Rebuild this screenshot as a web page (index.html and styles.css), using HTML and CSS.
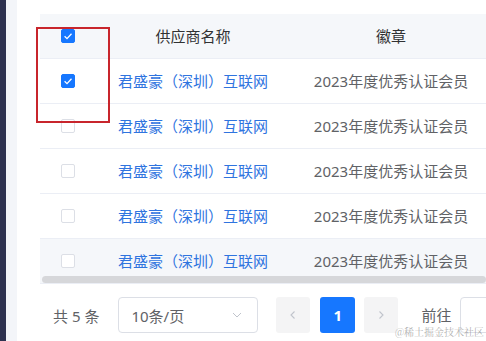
FILE: index.html
```html
<!DOCTYPE html>
<html lang="zh-CN">
<head>
    <meta charset="UTF-8">
    <meta name="viewport" content="width=device-width, initial-scale=1.0">
    <title>供应商列表</title>
    <link rel="stylesheet" href="styles.css">
</head>
<body>
    <div class="layout">
        <div class="sidebar"></div>
        <div class="gutter"></div>
        <div class="main">
            <div class="table-wrap">
                <table class="table">
                    <colgroup>
                        <col class="col-check">
                        <col class="col-name">
                        <col class="col-badge">
                    </colgroup>
                    <thead>
                        <tr>
                            <th><span class="checkbox checked"><svg viewBox="0 0 14 14"><path d="M3.6 7.3 L6 9.6 L10.5 4.8" /></svg></span></th>
                            <th>供应商名称</th>
                            <th>徽章</th>
                        </tr>
                    </thead>
                    <tbody>
                        <tr>
                            <td><span class="checkbox checked"><svg viewBox="0 0 14 14"><path d="M3.6 7.3 L6 9.6 L10.5 4.8" /></svg></span></td>
                            <td class="link">君盛豪（深圳）互联网</td>
                            <td>2023年度优秀认证会员</td>
                        </tr>
                        <tr>
                            <td><span class="checkbox"></span></td>
                            <td class="link">君盛豪（深圳）互联网</td>
                            <td>2023年度优秀认证会员</td>
                        </tr>
                        <tr>
                            <td><span class="checkbox"></span></td>
                            <td class="link">君盛豪（深圳）互联网</td>
                            <td>2023年度优秀认证会员</td>
                        </tr>
                        <tr>
                            <td><span class="checkbox"></span></td>
                            <td class="link">君盛豪（深圳）互联网</td>
                            <td>2023年度优秀认证会员</td>
                        </tr>
                        <tr class="hover">
                            <td><span class="checkbox"></span></td>
                            <td class="link">君盛豪（深圳）互联网</td>
                            <td>2023年度优秀认证会员</td>
                        </tr>
                    </tbody>
                </table>
                <div class="scrollbar"></div>
                <!-- 标注框 -->
                <div class="mark"></div>
            </div>

            <div class="pagination">
                <span class="total">共 5 条</span>
                <div class="select">
                    <span>10条/页</span>
                    <svg class="arrow" viewBox="0 0 12 12"><path d="M2 4 L6 8 L10 4" /></svg>
                </div>
                <button class="btn-nav" disabled><svg viewBox="0 0 12 12"><path d="M7.5 2.5 L4 6 L7.5 9.5" /></svg></button>
                <button class="pager active">1</button>
                <button class="btn-nav" disabled><svg viewBox="0 0 12 12"><path d="M4.5 2.5 L8 6 L4.5 9.5" /></svg></button>
                <span class="jump">前往</span>
                <div class="jump-input"></div>
            </div>
        </div>
    </div>
    <div class="watermark">@稀土掘金技术社区</div>
</body>
</html>
```

FILE: styles.css
```css
body {
    margin: 0;
    font-family: "Noto Sans", "Noto Sans CJK SC", sans-serif;
    background-color: #ffffff;
    height: 341px;
    overflow: hidden;
}
.layout {
    display: flex;
    height: 100%;
}
.sidebar {
    width: 6px;
    flex-shrink: 0;
    background-color: #2e3250;
}
.gutter {
    width: 11px;
    flex-shrink: 0;
    background-color: #f3f5f9;
}
.main {
    flex: 1;
    min-width: 0;
    padding: 14px 0 0 23px;
    overflow: hidden;
}
.table-wrap {
    position: relative;
    width: 100%;
}
.table {
    table-layout: fixed;
    border-collapse: collapse;
    width: 451px;
}
.col-check { width: 55px; }
.col-name { width: 196px; }
.col-badge { width: 200px; }
.table th,
.table td {
    padding: 0;
    text-align: center;
    font-size: 15px;
    line-height: 20px;
    border-bottom: 1px solid #ebeef5;
    white-space: nowrap;
}
.table th {
    height: 44px;
    background-color: #f5f7fa;
    color: #303133;
    font-weight: normal;
}
.table td {
    height: 44px;
    color: #606266;
}
.table td.link {
    color: #2f74df;
}
.table tr.hover td {
    background-color: #f5f7fa;
}
.checkbox {
    display: block;
    margin: 0 auto;
    width: 14px;
    height: 14px;
    box-sizing: border-box;
    border: 1px solid #dcdfe6;
    border-radius: 2px;
    background: #ffffff;
}
.checkbox.checked {
    background-color: #1677ff;
    border-color: #1677ff;
}
.checkbox svg {
    display: block;
    width: 14px;
    height: 14px;
    margin: -1px;
    fill: none;
    stroke: #ffffff;
    stroke-width: 1.3;
}
.scrollbar {
    position: absolute;
    left: 2px;
    right: 0;
    bottom: 1px;
    height: 7px;
    border-radius: 4px;
    background-color: #d6d7da;
}
.mark {
    position: absolute;
    left: -4px;
    top: 13px;
    width: 70px;
    height: 92px;
    border: 2px solid #c8252c;
}
.pagination {
    display: flex;
    align-items: center;
    margin-top: 13px;
    padding-left: 13px;
    height: 36px;
    font-size: 15px;
    color: #606266;
}
.total {
    margin-right: 19px;
    white-space: nowrap;
}
.select {
    display: flex;
    align-items: center;
    justify-content: space-between;
    width: 140px;
    height: 36px;
    box-sizing: border-box;
    padding: 0 14px 0 12px;
    border: 1px solid #dcdfe6;
    border-radius: 4px;
    margin-right: 18px;
    flex-shrink: 0;
    white-space: nowrap;
}
.select .arrow {
    width: 12px;
    height: 12px;
    fill: none;
    stroke: #c0c4cc;
    stroke-width: 1;
}
button {
    font-family: inherit;
    border: none;
    padding: 0;
    flex-shrink: 0;
}
.btn-nav {
    width: 34px;
    height: 36px;
    border-radius: 3px;
    background-color: #f4f4f5;
    display: flex;
    align-items: center;
    justify-content: center;
}
.btn-nav svg {
    width: 12px;
    height: 12px;
    fill: none;
    stroke: #c0c4cc;
    stroke-width: 1.1;
}
.pager {
    width: 35px;
    height: 36px;
    margin: 0 9px 0 10px;
    border-radius: 3px;
    font-size: 15px;
    font-weight: bold;
}
.pager.active {
    background-color: #1677ff;
    color: #ffffff;
}
.jump {
    margin-left: 23px;
    margin-right: 9px;
    line-height: 16px;
    white-space: nowrap;
}
.jump-input {
    width: 60px;
    height: 36px;
    flex-shrink: 0;
    box-sizing: border-box;
    border: 1px solid #dcdfe6;
    border-radius: 4px;
}
.watermark {
    position: absolute;
    right: 2px;
    bottom: 3px;
    font-family: "Noto Serif CJK SC", "Noto Sans CJK SC", serif;
    font-size: 10px;
    line-height: 12px;
    color: rgba(150, 150, 150, 0.75);
}
```
